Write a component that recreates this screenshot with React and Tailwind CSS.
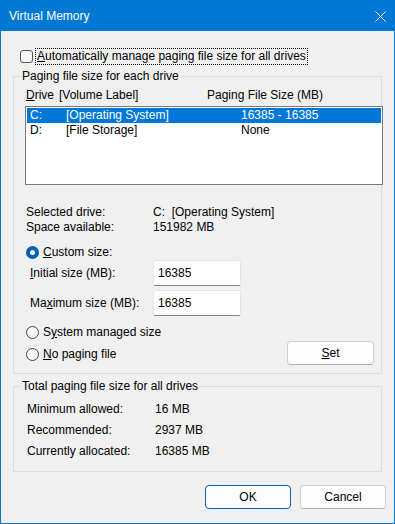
import React from "react"

function Radio({ checked }) {
    if (checked) {
        return (
            <span className="w-[13px] h-[13px] rounded-full bg-[#005fb8] flex items-center justify-center shrink-0">
                <span className="w-[5px] h-[5px] rounded-full bg-white"></span>
            </span>
        )
    }
    return <span className="w-[13px] h-[13px] rounded-full border border-[#444] bg-[#f7f7f7] shrink-0"></span>
}

function Group({ title, className, children }) {
    return (
        <div className={"border border-[#dcdcdc] w-[369px] " + className}>
            <div className="-mt-[9px] ml-[7px] px-[1px] w-fit bg-[#f0f0f0] leading-4">{title}</div>
            {children}
        </div>
    )
}

function InputRow({ label, value, mt }) {
    return (
        <div className={"flex items-center " + mt}>
            <div className="w-[123px] ml-[16px]">{label}</div>
            <div className="w-[88px] h-[26px] bg-white border border-[#e5e5e5] border-b-[#868686] rounded-[2px] flex items-center pl-[4px]">
                {value}
            </div>
        </div>
    )
}

export default function App() {
    return (
        <div className="w-[395px] h-[524px] border border-[#0078d4] bg-[#f0f0f0] flex flex-col text-[12px] text-black leading-[15px] font-['Liberation_Sans',Arial,sans-serif]">
            <div className="h-[30px] bg-[#0078d4] flex items-center justify-between pl-[8px] pr-[8px] text-white">
                <span className="text-[12px]">Virtual Memory</span>
                <svg width="11" height="11" viewBox="0 0 11 11" className="mr-[0px]">
                    <path d="M0.5 0.5 L10.5 10.5 M10.5 0.5 L0.5 10.5" stroke="white" strokeWidth="1" />
                </svg>
            </div>

            <div className="pl-[12px] flex flex-col">
                <div className="flex items-center mt-[17px] h-[17px]">
                    <span className="ml-[7px] w-[13px] h-[13px] border border-[#555] rounded-[3px] bg-[#f8f8f8]"></span>
                    <span className="ml-[2px] h-[17px] px-[1px] border border-dotted border-black flex items-center">
                        <span><span className="underline">A</span>utomatically manage paging file size for all drives</span>
                    </span>
                </div>

                <Group title="Paging file size for each drive" className="mt-[11px] pb-[8px]">
                    <div className="flex mt-[3px] leading-4 ml-[12px]">
                        <span className="w-[33px]"><span className="underline">D</span>rive</span>
                        <span className="w-[148px]">[Volume Label]</span>
                        <span>Paging File Size (MB)</span>
                    </div>
                    <div className="mt-[3px] ml-[11px] w-[358px] h-[79px] border border-[#7a7a7a] bg-white p-[1px] flex flex-col">
                        <div className="h-[15px] bg-[#0078d7] text-white flex items-center pl-[3px]">
                            <span className="w-[36px]">C:</span>
                            <span className="w-[175px]">[Operating System]</span>
                            <span>16385 - 16385</span>
                        </div>
                        <div className="h-[15px] flex items-center pl-[3px]">
                            <span className="w-[36px]">D:</span>
                            <span className="w-[175px]">[File Storage]</span>
                            <span>None</span>
                        </div>
                    </div>

                    <div className="mt-[20px] ml-[12px] flex">
                        <span className="w-[127px]">Selected drive:</span>
                        <span>C:&nbsp;&nbsp;[Operating System]</span>
                    </div>
                    <div className="ml-[12px] flex">
                        <span className="w-[127px]">Space available:</span>
                        <span>151982 MB</span>
                    </div>

                    <div className="mt-[10px] ml-[12px] flex items-center h-[15px]">
                        <Radio checked />
                        <span className="ml-[4px]"><span className="underline">C</span>ustom size:</span>
                    </div>
                    <InputRow label={<span><span className="underline">I</span>nitial size (MB):</span>} value="16385" mt="" />
                    <InputRow label={<span>Ma<span className="underline">x</span>imum size (MB):</span>} value="16385" mt="mt-[4px]" />

                    <div className="mt-[9px] ml-[12px] flex items-center h-[15px]">
                        <Radio />
                        <span className="ml-[4px]">S<span className="underline">y</span>stem managed size</span>
                    </div>
                    <div className="mt-[1px] ml-[12px] mr-[7px] flex items-center justify-between">
                        <div className="flex items-center h-[15px] mt-[3px]">
                            <Radio />
                            <span className="ml-[4px]"><span className="underline">N</span>o paging file</span>
                        </div>
                        <button className="w-[87px] h-[24px] bg-[#fdfdfd] border border-[#d0d0d0] border-b-[#b0b0b0] rounded-[4px]">
                            <span className="underline">S</span>et
                        </button>
                    </div>
                </Group>

                <Group title="Total paging file size for all drives" className="mt-[12px] pb-[12px]">
                    <div className="mt-[8px] ml-[13px] flex">
                        <span className="w-[128px]">Minimum allowed:</span>
                        <span>16 MB</span>
                    </div>
                    <div className="mt-[6px] ml-[13px] flex">
                        <span className="w-[128px]">Recommended:</span>
                        <span>2937 MB</span>
                    </div>
                    <div className="mt-[6px] ml-[13px] flex">
                        <span className="w-[128px]">Currently allocated:</span>
                        <span>16385 MB</span>
                    </div>
                </Group>

                <div className="mt-[13px] flex justify-end gap-[9px] mr-[8px]">
                    <button className="w-[86px] h-[24px] bg-[#fdfdfd] border border-[#005fb8] rounded-[4px]">OK</button>
                    <button className="w-[86px] h-[24px] bg-[#fdfdfd] border border-[#d0d0d0] border-b-[#b0b0b0] rounded-[4px]">Cancel</button>
                </div>
            </div>
        </div>
    )
}
